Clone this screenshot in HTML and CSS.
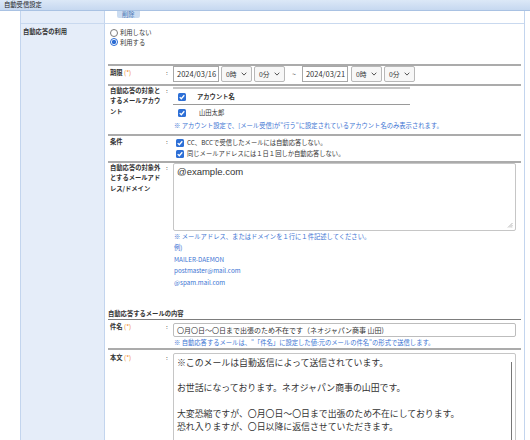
FILE: index.html
```html
<!DOCTYPE html>
<html lang="ja">
<head>
<meta charset="utf-8">
<title>自動受信設定</title>
<link rel="stylesheet" href="styles.css">
</head>
<body>
<div class="panel-head">自動受信設定</div>
<div class="form">
  <div class="row row-prev">
    <div class="th"></div>
    <div class="td"><span class="btn-del">削除</span></div>
  </div>
  <div class="row row-main">
    <div class="th">自動応答の利用</div>
    <div class="td">
      <div class="radios">
        <div class="radio-line"><span class="radio"></span><span>利用しない</span></div>
        <div class="radio-line"><span class="radio on"></span><span>利用する</span></div>
      </div>

      <div class="sub">
        <div class="sub-row r-period">
          <div class="lbl">期限 <span class="req">(*)</span></div>
          <div class="colon">:</div>
          <div class="val period">
            <span class="date">2024/03/16</span>
            <span class="sel">0時<svg class="chev" viewBox="0 0 6 4"><path d="M0.7 0.7 L3 3.1 L5.3 0.7"/></svg></span>
            <span class="sel">0分<svg class="chev" viewBox="0 0 6 4"><path d="M0.7 0.7 L3 3.1 L5.3 0.7"/></svg></span>
            <span class="tilde">~</span>
            <span class="date">2024/03/21</span>
            <span class="sel sel-gap">0時<svg class="chev" viewBox="0 0 6 4"><path d="M0.7 0.7 L3 3.1 L5.3 0.7"/></svg></span>
            <span class="sel">0分<svg class="chev" viewBox="0 0 6 4"><path d="M0.7 0.7 L3 3.1 L5.3 0.7"/></svg></span>
          </div>
        </div>

        <div class="sub-row r-acct">
          <div class="lbl">自動応答の対象とするメールアカウント</div>
          <div class="colon">:</div>
          <div class="val">
            <div class="acct">
              <div class="acct-row acct-head">
                <span class="cb"><svg viewBox="0 0 8 8"><path d="M1.7 4.1 L3.3 5.7 L6.3 2.3"/></svg></span>
                <span class="acct-name">アカウント名</span>
              </div>
              <div class="acct-row">
                <span class="cb"><svg viewBox="0 0 8 8"><path d="M1.7 4.1 L3.3 5.7 L6.3 2.3"/></svg></span>
                <span class="acct-user">山田太郎</span>
              </div>
            </div>
            <div class="note">※ アカウント設定で、[メール受信]が"行う"に設定されているアカウント名のみ表示されます。</div>
          </div>
        </div>

        <div class="sub-row r-cond">
          <div class="lbl">条件</div>
          <div class="colon">:</div>
          <div class="val">
            <div class="check-line"><span class="cb"><svg viewBox="0 0 8 8"><path d="M1.7 4.1 L3.3 5.7 L6.3 2.3"/></svg></span><span>CC、BCCで受信したメールには自動応答しない。</span></div>
            <div class="check-line"><span class="cb"><svg viewBox="0 0 8 8"><path d="M1.7 4.1 L3.3 5.7 L6.3 2.3"/></svg></span><span>同じメールアドレスには１日１回しか自動応答しない。</span></div>
          </div>
        </div>

        <div class="sub-row r-excl">
          <div class="lbl">自動応答の対象外とするメールアドレス/ドメイン</div>
          <div class="colon">:</div>
          <div class="val">
            <div class="textarea small-ta">@example.com<svg class="grip" viewBox="0 0 6 6"><path d="M5.5 1 L1 5.5 M5.5 3 L3 5.5 M5.5 4.8 L4.8 5.5"/></svg></div>
            <div class="note-list">
              <div>※ メールアドレス、またはドメインを１行に１件記述してください。</div>
              <div>例)</div>
              <div>MAILER-DAEMON</div>
              <div>postmaster@mail.com</div>
              <div>@spam.mail.com</div>
            </div>
          </div>
        </div>

        <div class="section-title">自動応答するメールの内容</div>

        <div class="sub-row r-subject">
          <div class="lbl">件名 <span class="req">(*)</span></div>
          <div class="colon">:</div>
          <div class="val">
            <div class="text-input">〇月〇日～〇日まで出張のため不在です（ネオジャパン商事 山田)</div>
            <div class="note">※ 自動応答するメールは、"「件名」に設定した値:元のメールの件名"の形式で送信します。</div>
          </div>
        </div>

        <div class="sub-row r-body">
          <div class="lbl">本文 <span class="req">(*)</span></div>
          <div class="colon">:</div>
          <div class="val">
            <div class="textarea body-ta">
              <div class="body-text">
                <div>※このメールは自動返信によって送信されています。</div>
                <div>&nbsp;</div>
                <div>お世話になっております。ネオジャパン商事の山田です。</div>
                <div>&nbsp;</div>
                <div>大変恐縮ですが、〇月〇日～〇日まで出張のため不在にしております。</div>
                <div>恐れ入りますが、〇日以降に返信させていただきます。</div>
              </div>
              <div class="vscroll"></div>
            </div>
          </div>
        </div>
      </div>
    </div>
  </div>
</div>
</body>
</html>
```

FILE: styles.css
```css
* { box-sizing: border-box; }

html, body {
  margin: 0;
  padding: 0;
}

body {
  width: 530px;
  height: 440px;
  overflow: hidden;
  background: #fff;
  font-family: "Noto Sans CJK JP", "Noto Sans", sans-serif;
  font-size: 6.3px;
  color: #333;
}

.panel-head {
  height: 11px;
  line-height: 10px;
  padding-left: 4px;
  background: linear-gradient(#dce8f7, #c6d8f0);
  border-bottom: 1px solid #a9c2e3;
  color: #222;
}

.form {
  height: 429px;
  overflow: hidden;
  margin: 0 5px 0 20px;
  border-left: 1px solid #c3d5ee;
  border-right: 1px solid #c3d5ee;
}

.row {
  display: flex;
  border-bottom: 1px solid #c9d9ef;
}

.th {
  width: 84px;
  flex: none;
  background: #e5edf9;
  border-right: 1px solid #c3d5ee;
  padding: 3px 2px 0;
  font-weight: bold;
  line-height: 10px;
}

.td {
  flex: 1;
  min-width: 0;
  padding: 0 3px;
}

.row-prev {
  height: 13px;
  overflow: hidden;
}

.row-prev .td {
  overflow: hidden;
}

.btn-del {
  display: inline-block;
  margin: -1px 0 0 9px;
  height: 8px;
  line-height: 9px;
  padding: 0 5px;
  background: #cbdcf1;
  color: #4d77b5;
  border-radius: 0 0 2px 2px;
  vertical-align: top;
}

.radios {
  padding: 4px 0 0 2px;
}

.radio-line {
  display: flex;
  align-items: center;
  gap: 2px;
  height: 9.5px;
}

.radio {
  width: 8px;
  height: 8px;
  border-radius: 50%;
  border: 1px solid #7a7a7a;
  background: #fff;
  flex: none;
}

.radio.on {
  border-color: #2b6cd4;
  background: radial-gradient(circle, #2b6cd4 0 1.9px, #fff 2.4px);
}

.sub {
  margin-top: 17px;
}

.sub-row {
  display: grid;
  grid-template-columns: 56px 9px 1fr;
  border-top: 2px solid #ababab;
}

.lbl {
  padding: 0 0 0 2px;
  font-weight: bold;
  line-height: 10.4px;
}

.colon {
  padding: 0 0 0 2px;
  line-height: 10px;
}

.req {
  color: #f08c2a;
  font-weight: normal;
}

.val {
  min-width: 0;
}

/* period */
.r-period .lbl,
.r-period .colon {
  padding-top: 2px;
}

.period {
  display: flex;
  align-items: center;
  gap: 2px;
  padding-bottom: 2px;
}

.date {
  width: 46px;
  height: 16px;
  border: 1px solid #a8a8a8;
  padding-left: 3px;
  font-size: 7.5px;
  line-height: 14px;
  color: #333;
  background: #fff;
}

.sel {
  display: flex;
  align-items: center;
  justify-content: space-between;
  width: 31px;
  height: 16px;
  border: 1px solid #b8b8b8;
  border-radius: 2px;
  padding: 0 4px 0 4px;
  background: #f7f7f7;
  font-size: 6.8px;
  color: #333;
}

.chev {
  width: 6px;
  height: 4px;
}

.chev path {
  fill: none;
  stroke: #555;
  stroke-width: 1;
}

.tilde {
  margin: 0 4px 0 5px;
  font-size: 7px;
  color: #555;
}

.sel-gap {
  margin-left: 1px;
}

/* accounts */
.acct {
  width: 237px;
  margin-top: 1px;
  border-top: 2px solid #c6c6c6;
}

.acct-row {
  display: flex;
  align-items: center;
  height: 15px;
  padding-left: 5px;
}

.acct-head {
  height: 16px;
  border-bottom: 1px solid #9a9a9a;
  font-weight: bold;
}

.acct-name {
  margin-left: 11px;
}

.acct-user {
  margin-left: 13px;
}

.cb {
  width: 8px;
  height: 8px;
  border-radius: 1.5px;
  background: #2d6fd6;
  flex: none;
  display: block;
}

.cb svg {
  display: block;
  width: 8px;
  height: 8px;
}

.cb path {
  fill: none;
  stroke: #fff;
  stroke-width: 1.3;
}

.note {
  color: #3b73d3;
  line-height: 11px;
  padding-left: 1px;
}

.r-acct .val {
  padding-bottom: 3px;
}

/* conditions */
.r-cond .lbl,
.r-cond .colon {
  padding-top: 1px;
}

.r-cond .val {
  padding: 1px 0 2px 3px;
}

.check-line {
  display: flex;
  align-items: center;
  gap: 3px;
  height: 11px;
}

/* exclusions */
.textarea {
  position: relative;
  border: 1px solid #c6c6c6;
  border-radius: 2px;
  background: #fff;
}

.small-ta {
  width: 343px;
  height: 68px;
  padding: 2px 3px;
  font-family: "Liberation Sans", "Noto Sans CJK JP", sans-serif;
  font-size: 9.5px;
  line-height: 11px;
  color: #333;
}

.grip {
  position: absolute;
  right: 2px;
  bottom: 2px;
  width: 6px;
  height: 6px;
}

.grip path {
  fill: none;
  stroke: #999;
  stroke-width: 0.7;
}

.note-list {
  color: #3b73d3;
  line-height: 11.4px;
  padding-left: 1px;
}

.section-title {
  margin-top: 21px;
  line-height: 10px;
  font-weight: bold;
  border-bottom: 1px solid #7d7d7d;
}

/* subject */
.r-subject {
  border-top: none;
}

.r-subject .lbl,
.r-subject .colon {
  padding-top: 1.5px;
}

.r-subject .val {
  padding-top: 2.5px;
}

.text-input {
  width: 343px;
  height: 14px;
  border: 1px solid #bdbdbd;
  border-radius: 2px;
  padding-left: 3px;
  font-size: 7px;
  line-height: 12px;
  color: #333;
  white-space: nowrap;
  overflow: hidden;
}

/* body */
.r-body .lbl,
.r-body .colon {
  padding-top: 3px;
}

.r-body .val {
  padding-top: 3px;
}

.body-ta {
  width: 343px;
  height: 100px;
  display: flex;
  padding: 3px 3px 0 3px;
}

.body-text {
  flex: 1;
  font-size: 8.9px;
  line-height: 12.8px;
  color: #333;
  white-space: nowrap;
}

.vscroll {
  width: 1px;
  background: #777;
  margin: 5px 0 0 0;
}
```
